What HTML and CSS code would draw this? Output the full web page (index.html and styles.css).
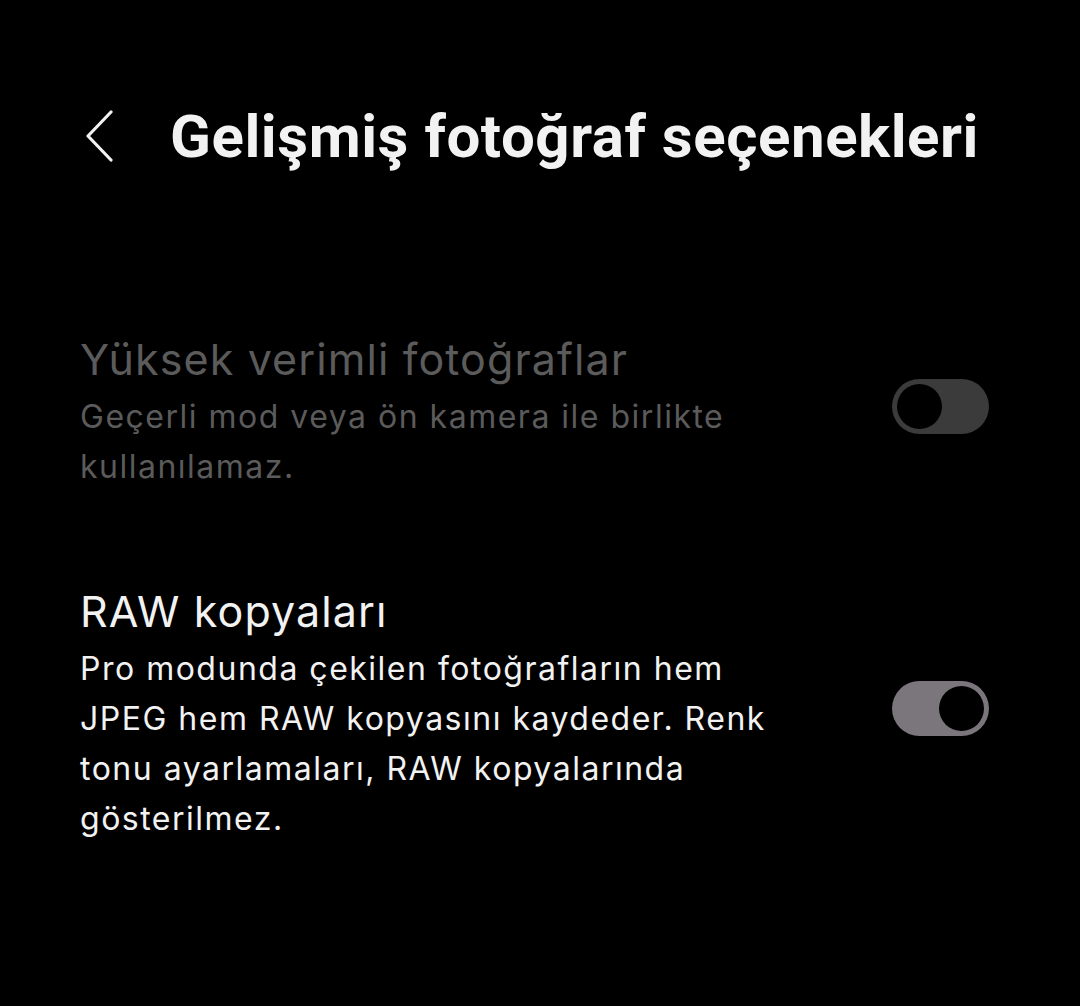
FILE: index.html
```html
<!DOCTYPE html>
<html lang="tr">

<head>
    <meta charset="UTF-8">
    <meta name="viewport" content="width=device-width, initial-scale=1.0">
    <title>Gelişmiş fotoğraf seçenekleri</title>
    <link rel="stylesheet" href="styles.css">
</head>

<body>
    <div class="screen">
        <div class="header">
            <button class="back" aria-label="Geri">
                <svg width="30" height="52" viewBox="0 0 30 52">
                    <path d="M27 2 L4 26 L27 50" fill="none" stroke="#f2f2f2" stroke-width="3.2"
                        stroke-linecap="round" stroke-linejoin="round" />
                </svg>
            </button>
            <h1>Gelişmiş fotoğraf seçenekleri</h1>
        </div>

        <div class="setting disabled">
            <div class="setting-text">
                <div class="setting-title">Yüksek verimli fotoğraflar</div>
                <div class="setting-desc">Geçerli mod veya ön kamera ile birlikte kullanılamaz.</div>
            </div>
            <div class="switch off">
                <div class="knob"></div>
            </div>
        </div>

        <div class="setting">
            <div class="setting-text">
                <div class="setting-title">RAW kopyaları</div>
                <div class="setting-desc">Pro modunda çekilen fotoğrafların hem JPEG hem RAW kopyasını kaydeder. Renk tonu ayarlamaları, RAW kopyalarında gösterilmez.</div>
            </div>
            <div class="switch on">
                <div class="knob"></div>
            </div>
        </div>
    </div>
</body>

</html>
```

FILE: styles.css
```css
body {
    margin: 0;
    padding: 0;
    background-color: #000;
    color: #f2f2f2;
    font-family: Inter, Roboto, sans-serif;
}

.screen {
    width: 1080px;
    height: 1006px;
    overflow: hidden;
}

.header {
    display: flex;
    align-items: center;
    padding: 108px 0 0 84px;
    height: 56px;
}

.back {
    background: none;
    border: none;
    padding: 0;
    width: 30px;
    height: 52px;
    margin-right: 56px;
    cursor: pointer;
}

h1 {
    margin: 0;
    font-family: Roboto, Inter, sans-serif;
    font-size: 60px;
    font-weight: 700;
    letter-spacing: 0.55px;
    color: #f2f2f2;
}

.setting {
    display: flex;
    align-items: center;
    justify-content: space-between;
    padding: 0 91px 0 80px;
}

.setting.disabled {
    margin-top: 166px;
}

.setting + .setting {
    margin-top: 90px;
}

.setting-text {
    width: 720px;
}

.setting-title {
    font-size: 43px;
    line-height: 58px;
    letter-spacing: 1.1px;
    padding-bottom: 4px;
}

.setting-desc {
    font-size: 32px;
    line-height: 50px;
    letter-spacing: 1.5px;
}

.disabled .setting-title,
.disabled .setting-desc {
    color: #5b5b5b;
}

.switch {
    position: relative;
    width: 97px;
    height: 55px;
    border-radius: 28px;
    flex-shrink: 0;
    margin-bottom: 10px;
}

.switch.off {
    background-color: #3b3b3b;
}

.switch.on {
    background-color: #7b767c;
}

.knob {
    position: absolute;
    top: 5px;
    width: 45px;
    height: 45px;
    border-radius: 50%;
    background-color: #000;
}

.off .knob {
    left: 5px;
}

.on .knob {
    right: 5px;
}
```
